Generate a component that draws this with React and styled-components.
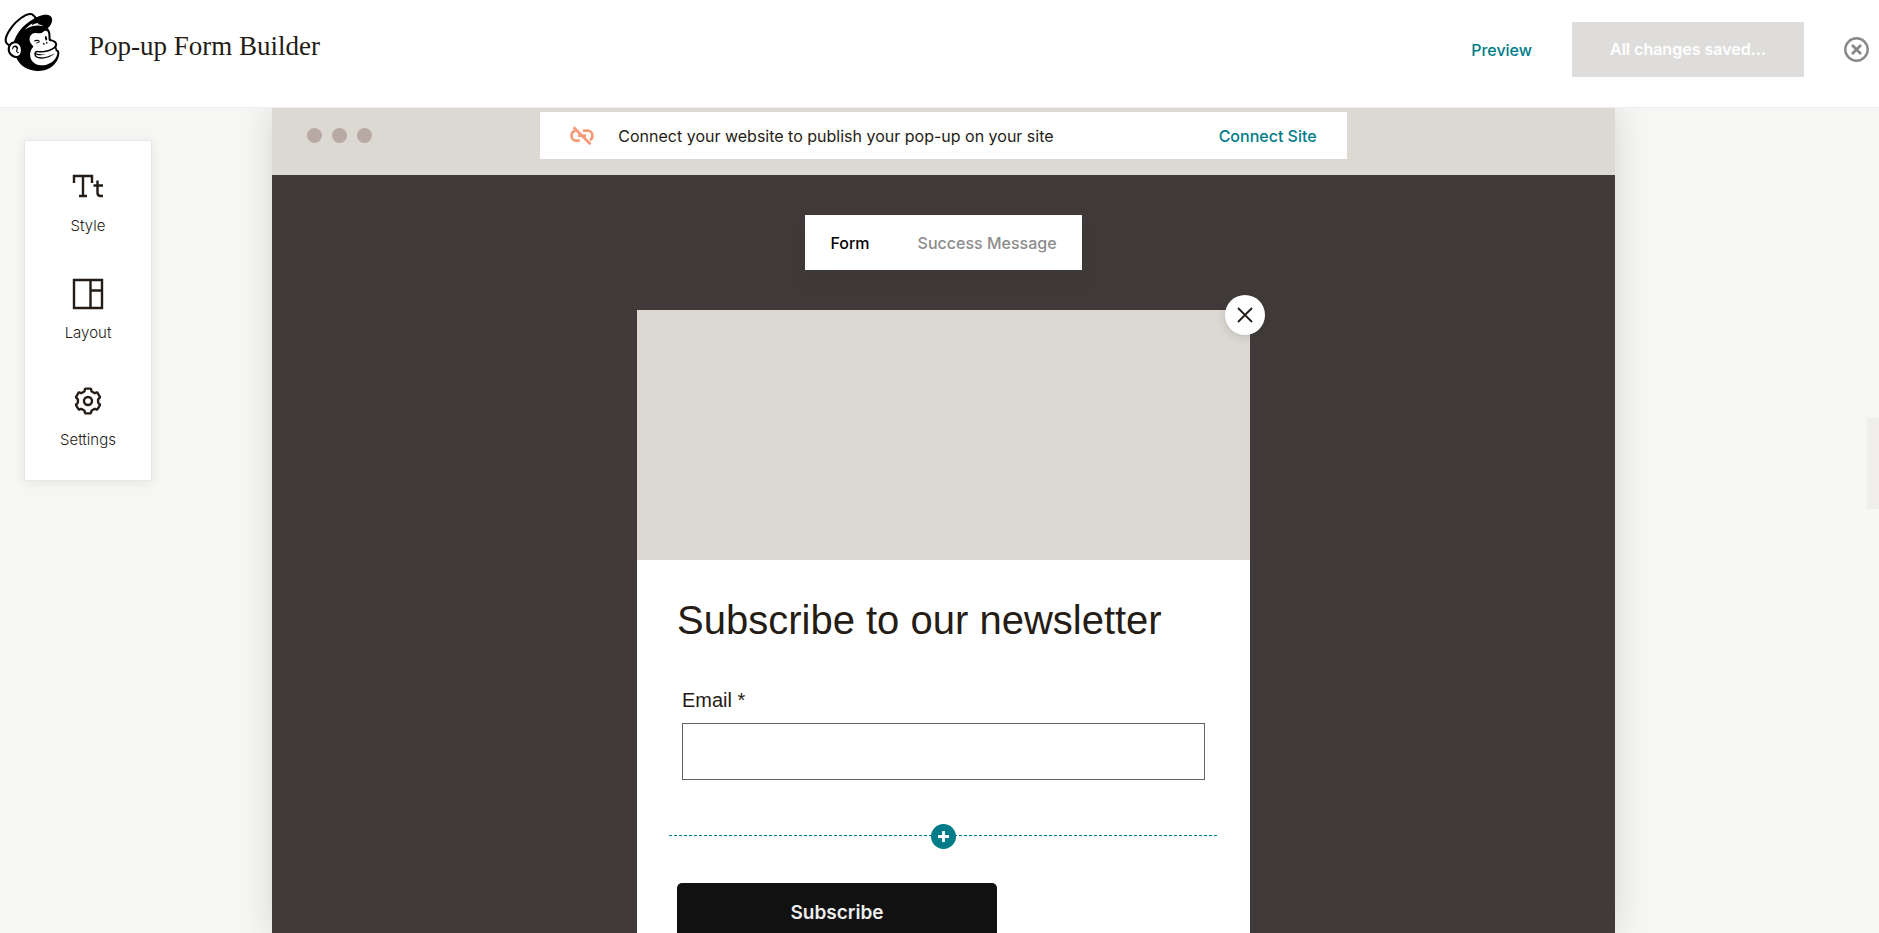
import React from 'react';
import styled, { createGlobalStyle } from 'styled-components';
import { SiMailchimp } from 'react-icons/si';

export default function App() {
  return (
    <Page>
      <GlobalStyle />
      <Header>
        <Logo href="#home" aria-label="Home">
          <SiMailchimp />
        </Logo>
        <Title>Pop-up Form Builder</Title>
        <PreviewButton type="button">Preview</PreviewButton>
        <SaveButton type="button">All changes saved...</SaveButton>
        <ExitButton type="button" aria-label="Exit">
          <ExitIcon />
        </ExitButton>
      </Header>
      <Workspace>
        <Side>
          <ToolPanel>
            <Tool type="button">
              <StyleIcon />
              <ToolName>Style</ToolName>
            </Tool>
            <Tool type="button">
              <LayoutIcon />
              <ToolName>Layout</ToolName>
            </Tool>
            <Tool type="button">
              <SettingsIcon />
              <ToolName>Settings</ToolName>
            </Tool>
          </ToolPanel>
        </Side>
        <Browser>
          <BrowserBar>
            <Dots>
              <Dot />
              <Dot />
              <Dot />
            </Dots>
            <Banner>
              <UnlinkIcon />
              <BannerText>
                Connect your website to publish your pop-up on your site
              </BannerText>
              <BannerLink href="#connect">Connect Site</BannerLink>
            </Banner>
          </BrowserBar>
          <Canvas>
            <Tabs>
              <Tab type="button" $active>
                Form
              </Tab>
              <Tab type="button">Success Message</Tab>
            </Tabs>
            <Popup>
              <CloseButton type="button" aria-label="Close">
                <CloseIcon />
              </CloseButton>
              <PopupImage />
              <PopupBody>
                <Heading>Subscribe to our newsletter</Heading>
                <Field>
                  <Label htmlFor="email">Email *</Label>
                  <Input id="email" type="email" />
                </Field>
                <Divider>
                  <AddButton type="button" aria-label="Add field">
                    <PlusIcon />
                  </AddButton>
                </Divider>
                <SubscribeButton type="button">Subscribe</SubscribeButton>
              </PopupBody>
            </Popup>
          </Canvas>
        </Browser>
        <Side>
          <Handle />
        </Side>
      </Workspace>
    </Page>
  );
}

function ExitIcon() {
  return (
    <svg width="25" height="25" viewBox="0 0 25 25" fill="none" stroke="#86888a">
      <circle cx="12.5" cy="12.5" r="11.2" strokeWidth="2.4" />
      <path d="M8 8l9 9M17 8l-9 9" strokeWidth="2.8" />
    </svg>
  );
}

function StyleIcon() {
  return (
    <svg width="32" height="32" viewBox="0 0 32 32" fill="none" stroke="#241c15" strokeWidth="2.4">
      <path d="M2 12V5h18v7M11 5v20M7 25h8" />
      <path d="M21.500 14.500h9.500M25.500 9.500V21.500c0 2.500 1 3.500 3.200 3.500H31" />
    </svg>
  );
}

function LayoutIcon() {
  return (
    <svg width="32" height="32" viewBox="0 0 32 32" fill="none" stroke="#241c15" strokeWidth="2.4">
      <path d="M2 2h28v28H2zM18.500 2v28M18.500 12.500H30" />
    </svg>
  );
}

// six teeth, each given as [angle from the tooth's centre, radius]
const tooth = [
  [-22, 10.2],
  [-17, 11],
  [-15, 12.1],
  [-11, 12.6],
  [11, 12.6],
  [15, 12.1],
  [17, 11],
  [22, 10.2],
];

const gearPoints = [0, 60, 120, 180, 240, 300]
  .flatMap((start) =>
    tooth.map(([angle, radius]) => {
      const a = ((start + angle) * Math.PI) / 180;
      return `${16 + radius * Math.sin(a)},${16 - radius * Math.cos(a)}`;
    })
  )
  .join(' ');

function SettingsIcon() {
  return (
    <svg width="32" height="32" viewBox="0 0 32 32" fill="none" stroke="#241c15" strokeWidth="2.400" strokeLinejoin="round">
      <polygon points={gearPoints} />
      <circle cx="16" cy="16" r="4" />
    </svg>
  );
}

function UnlinkIcon() {
  return (
    <svg width="24" height="20" viewBox="0 0 24 20" fill="none" stroke="#f79a76" strokeWidth="2.7">
      <path d="M3.500 1.200l17 17" />
      <path d="M5.500 4.800C3 5.400 1.500 7.300 1.500 9.700c0 2.800 2.200 5 5 5h3.300" />
      <path d="M13 4.700h4.500c2.800 0 5 2.200 5 5 0 1.900-1 3.500-2.600 4.300M8 9.700h8" />
    </svg>
  );
}

function CloseIcon() {
  return (
    <svg width="16" height="16" viewBox="0 0 16 16" fill="none" stroke="#241c15" strokeWidth="1.8">
      <path d="M1 1l14 14M15 1L1 15" />
    </svg>
  );
}

function PlusIcon() {
  return (
    <svg width="11" height="11" viewBox="0 0 11 11" fill="none" stroke="#fff" strokeWidth="2.8">
      <path d="M5.500 0v11M0 5.500h11" />
    </svg>
  );
}

const GlobalStyle = createGlobalStyle`
  * {
    box-sizing: border-box;
  }
  body {
    margin: 0;
    background: #f6f6f4;
    color: #241c15;
    font-family: Inter, "Liberation Sans", sans-serif;
    font-size: 16px;
  }
  button {
    padding: 0;
    border: none;
    background: none;
    color: inherit;
    font: inherit;
    cursor: pointer;
  }
  svg {
    display: block;
    flex: none;
  }
`;

const Page = styled.div`
  display: flex;
  flex-direction: column;
  height: 100vh;
  overflow: hidden;
`;

const Header = styled.header`
  position: relative;
  z-index: 1;
  display: flex;
  flex: none;
  align-items: flex-start;
  height: 108px;
  padding: 0 10px 0 3px;
  border-bottom: 1px solid #ededeb;
  background: #fff;
`;

const Logo = styled.a`
  padding-top: 13px;
  color: #000;
  font-size: 58px;
`;

const Title = styled.h1`
  flex: 1;
  margin: 0;
  padding: 28px 0 0 28px;
  font-family: "Liberation Serif", serif;
  font-size: 27px;
  font-weight: 400;
  line-height: 36px;
`;

const PreviewButton = styled.button`
  margin: 22px 40px 0 0;
  color: #007c89;
  font-weight: 500;
  line-height: 56px;
`;

const SaveButton = styled.button`
  margin: 22px 40px 0 0;
  padding: 0 38px;
  background: #dedddb;
  color: #fff;
  font-weight: 600;
  line-height: 55px;
`;

const ExitButton = styled.button`
  margin-top: 37px;
`;

const Workspace = styled.main`
  display: flex;
  flex: 1;
  min-height: 0;
  padding-left: 8px;
`;

const Side = styled.aside`
  display: flex;
  flex: 1;
  align-items: flex-start;
  justify-content: space-between;
`;

const ToolPanel = styled.nav`
  display: flex;
  flex-direction: column;
  gap: 38px;
  width: 128px;
  margin: 32px 0 0 16px;
  padding: 30px 0 26px;
  border: 1px solid #e8e8e5;
  background: #fff;
  box-shadow: 0 2px 10px rgba(36, 28, 21, 0.07);
`;

const Tool = styled.button`
  display: flex;
  flex-direction: column;
  align-items: center;
  gap: 9px;
`;

const ToolName = styled.span`
  font-size: 15px;
  font-weight: 300;
  line-height: 28px;
`;

const Browser = styled.section`
  display: flex;
  flex: none;
  flex-direction: column;
  width: 71.83%;
  box-shadow: 0 0 32px rgba(36, 28, 21, 0.15);
`;

const BrowserBar = styled.div`
  display: grid;
  flex: none;
  grid-template-columns: 1fr 60% 1fr;
  align-items: start;
  padding: 4px 0 16px;
  background: #dcd9d2;
`;

const Dots = styled.div`
  display: flex;
  gap: 10px;
  padding: 16px 0 0 35px;
`;

const Dot = styled.span`
  width: 15px;
  height: 15px;
  border-radius: 50%;
  background: #b8a9a2;
`;

const Banner = styled.div`
  display: flex;
  align-items: center;
  height: 47px;
  padding: 0 30px;
  background: #fff;
`;

const BannerText = styled.p`
  flex: 1;
  margin: 0;
  padding-left: 24px;
`;

const BannerLink = styled.a`
  color: #007c89;
  font-weight: 500;
  text-decoration: none;
`;

const Canvas = styled.div`
  display: flex;
  flex: 1;
  flex-direction: column;
  align-items: center;
  gap: 40px;
  min-height: 0;
  padding-top: 40px;
  background: #403b3a;
`;

const Tabs = styled.div`
  display: flex;
  flex: none;
  gap: 48px;
  height: 55px;
  padding: 0 25px;
  background: #fff;
  box-shadow: 0 12px 24px rgba(36, 28, 21, 0.15);
`;

const Tab = styled.button`
  color: ${(props) => (props.$active ? '#000' : '#8c8c8c')};
  font-weight: 500;
`;

const Popup = styled.article`
  position: relative;
  flex: none;
  width: 613px;
  max-width: 100%;
  background: #fff;
`;

const CloseButton = styled.button`
  position: absolute;
  top: -15px;
  right: -15px;
  display: flex;
  align-items: center;
  justify-content: center;
  width: 40px;
  height: 40px;
  border-radius: 50%;
  background: #fff;
  box-shadow: 0 2px 10px rgba(36, 28, 21, 0.15);
`;

const PopupImage = styled.div`
  height: 250px;
  background: #dcd9d2;
`;

const PopupBody = styled.div`
  padding: 32px;
  font-family: "Liberation Sans", Arial, sans-serif;
`;

const Heading = styled.h2`
  margin: 0;
  padding: 0 8px;
  font-size: 40px;
  font-weight: 400;
  line-height: 56px;
`;

const Field = styled.div`
  display: flex;
  flex-direction: column;
  gap: 8px;
  padding: 37px 13px 55px;
`;

const Label = styled.label`
  font-size: 20px;
  line-height: 30px;
`;

const Input = styled.input`
  width: 100%;
  height: 57px;
  padding: 0 16px;
  border: 1px solid #66625f;
  background: #fff;
  font-size: 20px;
`;

const Divider = styled.div`
  display: flex;
  align-items: center;
  justify-content: center;
  height: 3px;
  background: repeating-linear-gradient(to right, #007c89 0 3px, transparent 3px 5px) top / 100% 1px no-repeat;
`;

const AddButton = styled.button`
  display: flex;
  flex: none;
  align-items: center;
  justify-content: center;
  width: 25px;
  height: 25px;
  border-radius: 50%;
  background: #007c89;
`;

const SubscribeButton = styled.button`
  width: 320px;
  margin: 45px 8px 0;
  border-radius: 5px;
  background: #111;
  color: #eee;
  font-family: Inter, sans-serif;
  font-size: 19px;
  font-weight: 600;
  line-height: 60px;
`;

const Handle = styled.div`
  width: 12px;
  height: 91px;
  margin: 310px 0 0 auto;
  background: #efeeea;
`;
